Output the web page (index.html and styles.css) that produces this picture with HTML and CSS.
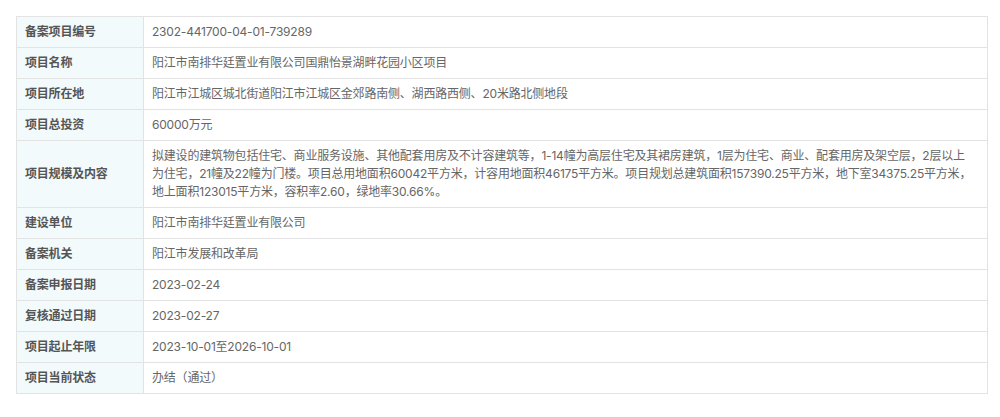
FILE: index.html
```html
<!DOCTYPE html>
<html lang="zh-CN">
<head>
    <meta charset="UTF-8">
    <meta name="viewport" content="width=device-width, initial-scale=1.0">
    <title>项目备案信息</title>
    <link rel="stylesheet" href="styles.css">
</head>
<body>
    <div class="detail-wrap">
        <table class="detail-table">
            <tr>
                <th>备案项目编号</th>
                <td>2302-441700-04-01-739289</td>
            </tr>
            <tr>
                <th>项目名称</th>
                <td>阳江市南排华廷置业有限公司国鼎怡景湖畔花园小区项目</td>
            </tr>
            <tr>
                <th>项目所在地</th>
                <td>阳江市江城区城北街道阳江市江城区金郊路南侧、湖西路西侧、20米路北侧地段</td>
            </tr>
            <tr>
                <th>项目总投资</th>
                <td>60000万元</td>
            </tr>
            <tr>
                <th>项目规模及内容</th>
                <td>拟建设的建筑物包括住宅、商业服务设施、其他配套用房及不计容建筑等，1-14幢为高层住宅及其裙房建筑，1层为住宅、商业、配套用房及架空层，2层以上为住宅，21幢及22幢为门楼。项目总用地面积60042平方米，计容用地面积46175平方米。项目规划总建筑面积157390.25平方米，地下室34375.25平方米，地上面积123015平方米，容积率2.60，绿地率30.66%。</td>
            </tr>
            <tr>
                <th>建设单位</th>
                <td>阳江市南排华廷置业有限公司</td>
            </tr>
            <tr>
                <th>备案机关</th>
                <td>阳江市发展和改革局</td>
            </tr>
            <tr>
                <th>备案申报日期</th>
                <td>2023-02-24</td>
            </tr>
            <tr>
                <th>复核通过日期</th>
                <td>2023-02-27</td>
            </tr>
            <tr>
                <th>项目起止年限</th>
                <td>2023-10-01至2026-10-01</td>
            </tr>
            <tr>
                <th>项目当前状态</th>
                <td>办结（通过）</td>
            </tr>
        </table>
    </div>
</body>
</html>
```

FILE: styles.css
```css
body {
    margin: 0;
    background: #fff;
    font-family: Inter, "Noto Sans CJK SC", sans-serif;
    font-size: 12px;
    color: #666;
}
.detail-wrap {
    padding: 16px 12px 0 16px;
}
.detail-table {
    width: 972px;
    border-collapse: collapse;
    table-layout: fixed;
}
.detail-table th,
.detail-table td {
    border: 1px solid #e3e3e3;
    padding: 6px 14px 6px 8px;
    line-height: 18px;
    letter-spacing: -0.2px;
    text-align: left;
    vertical-align: middle;
}
.detail-table th {
    width: 104px;
    background-color: #f2fafc;
    color: #555;
    font-weight: bold;
}
.detail-table td {
    word-break: break-all;
}
```
